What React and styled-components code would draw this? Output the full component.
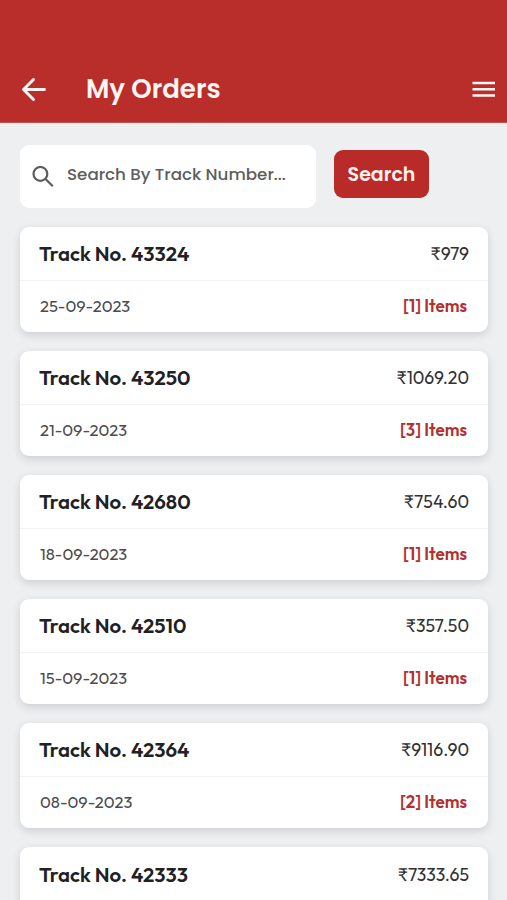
import styled, { createGlobalStyle } from 'styled-components';

const orders = [
	{ track: 43324, price: '979', date: '25-09-2023', items: 1 },
	{ track: 43250, price: '1069.20', date: '21-09-2023', items: 3 },
	{ track: 42680, price: '754.60', date: '18-09-2023', items: 1 },
	{ track: 42510, price: '357.50', date: '15-09-2023', items: 1 },
	{ track: 42364, price: '9116.90', date: '08-09-2023', items: 2 },
	{ track: 42333, price: '7333.65' },
];

export default function App() {
	return (
		<Container>
			<GlobalStyle />
			<Header>
				<IconButton aria-label="Back">
					<svg width="26" height="26" viewBox="0 0 26 26" fill="none" stroke="currentColor" strokeWidth="2.9" strokeLinecap="round" strokeLinejoin="round">
						<path d="M23.5 13.5H2.5M12.5 3.5l-10 10 10 10" />
					</svg>
				</IconButton>
				<Title>My Orders</Title>
				<IconButton aria-label="Menu">
					<svg width="23" height="16" viewBox="0 0 23 16" fill="currentColor">
						<path d="M.5.7H23v2.5H.5zM.5 7H23v2.5H.5zM.5 13.2H23v2.5H.5z" />
					</svg>
				</IconButton>
			</Header>
			<SearchBar>
				<SearchBox>
					<svg width="22" height="22" viewBox="0 0 22 22" fill="none" stroke="currentColor" strokeWidth="2.2">
						<circle cx="8.4" cy="7.9" r="6.9" />
						<path d="M13.3 12.8l7.5 7.5" />
					</svg>
					<Placeholder>Search By Track Number...</Placeholder>
				</SearchBox>
				<SearchButton>Search</SearchButton>
			</SearchBar>
			<OrderList>
				{orders.map((order) => (
					<Card key={order.track}>
						<CardTop>
							<Track>Track No. {order.track}</Track>
							<Price>₹{order.price}</Price>
						</CardTop>
						{order.date && (
							<CardBottom>
								<OrderDate>{order.date}</OrderDate>
								<Items>[{order.items}] Items</Items>
							</CardBottom>
						)}
					</Card>
				))}
			</OrderList>
		</Container>
	);
}

const GlobalStyle = createGlobalStyle`
	* {
		box-sizing: border-box;
	}

	body {
		margin: 0;
		overflow: hidden;
	}
`;

const Container = styled.div`
	height: 900px;
	overflow: hidden;
	background: #eeeff1;
	font-family: Outfit, Lato, sans-serif;
`;

const Header = styled.header`
	display: flex;
	align-items: center;
	height: 123px;
	padding: 56px 12px 0 21px;
	background: #b92e2b;
	color: #fff5f3;
	border-bottom: 1px solid #c5524f;
`;

const IconButton = styled.button`
	display: flex;
	padding: 0;
	border: 0;
	background: none;
	color: inherit;
`;

const Title = styled.h1`
	flex: 1;
	margin: 0 0 0 39px;
	font-family: Poppins, Inter, sans-serif;
	font-size: 26px;
	font-weight: 600;
	line-height: 32px;
	white-space: nowrap;
`;

const SearchBar = styled.div`
	display: flex;
	align-items: flex-start;
	gap: 18px;
	padding: 22px 20px 18.6px;
`;

const SearchBox = styled.div`
	display: flex;
	align-items: center;
	gap: 13px;
	width: 296px;
	height: 63px;
	padding-left: 12px;
	border-radius: 9px;
	background: #fff;
	color: #5b5d5f;
`;

const Placeholder = styled.span`
	padding-bottom: 5px;
	font-family: Poppins, Inter, sans-serif;
	font-size: 16.7px;
	font-weight: 500;
	white-space: nowrap;
`;

const SearchButton = styled.button`
	width: 95px;
	height: 48px;
	margin-top: 5px;
	padding: 1px 0 0;
	border: 0;
	border-radius: 9px;
	background: #b92b29;
	color: #fff1ef;
	font-family: Poppins, Inter, sans-serif;
	font-size: 19px;
	font-weight: 600;
`;

const OrderList = styled.div`
	display: flex;
	flex-direction: column;
	gap: 19.1px;
	padding: 0 19px 0 20px;
`;

const Card = styled.div`
	flex: none;
	height: 105px;
	border-radius: 9px;
	background: #fff;
	box-shadow: 0 3px 9px rgba(40, 45, 50, 0.16);
`;

const CardTop = styled.div`
	display: flex;
	align-items: center;
	justify-content: space-between;
	height: 54px;
	padding: 1px 19px 0;
	border-bottom: 1px solid #f3f3f4;
`;

const CardBottom = styled.div`
	display: flex;
	align-items: center;
	justify-content: space-between;
	height: 50px;
	padding: 0 21px 0 20px;
`;

const Track = styled.span`
	color: #202124;
	font-size: 20.4px;
	font-weight: 600;
`;

const Price = styled.span`
	color: #303134;
	font-size: 17.7px;
	font-weight: 400;
`;

const OrderDate = styled.span`
	color: #4b4c4f;
	font-size: 16.5px;
	font-weight: 400;
`;

const Items = styled.span`
	color: #b3302e;
	font-size: 17px;
	font-weight: 600;
`;
